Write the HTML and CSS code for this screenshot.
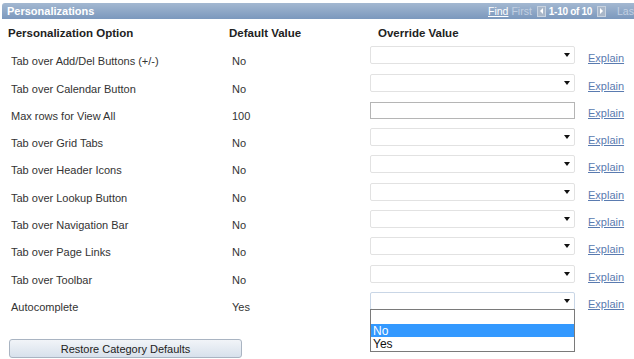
FILE: index.html
```html
<!DOCTYPE html>
<html lang="en">
<head>
    <meta charset="UTF-8">
    <title>Personalizations</title>
    <link rel="stylesheet" href="styles.css">
</head>
<body>

<div class="grid-bar">
    <span class="bar-title">Personalizations</span>
    <span class="bar-nav">
        <a class="find">Find</a>
        <span class="dim first">First</span>
        <span class="nav-icon"><svg width="7" height="8" viewBox="0 0 7 8"><path d="M5 1 L2 4 L5 7 Z" fill="#fff"/></svg></span>
        <b class="count">1-10 of 10</b>
        <span class="nav-icon next"><svg width="7" height="8" viewBox="0 0 7 8"><path d="M2 1 L5 4 L2 7 Z" fill="#fff"/></svg></span>
        <span class="dim last">Last</span>
    </span>
</div>

<div class="options">
    <div class="head">Personalization Option</div>
    <div class="head">Default Value</div>
    <div class="head head-override">Override Value</div>
    <div class="head"></div>

    <div class="opt">Tab over Add/Del Buttons (+/-)</div>
    <div class="def">No</div>
    <div class="val"><div class="dropdown"><span class="arrow"></span></div></div>
    <div class="explain"><a>Explain</a></div>

    <div class="opt">Tab over Calendar Button</div>
    <div class="def">No</div>
    <div class="val"><div class="dropdown"><span class="arrow"></span></div></div>
    <div class="explain"><a>Explain</a></div>

    <div class="opt">Max rows for View All</div>
    <div class="def">100</div>
    <div class="val"><div class="textbox"></div></div>
    <div class="explain"><a>Explain</a></div>

    <div class="opt">Tab over Grid Tabs</div>
    <div class="def">No</div>
    <div class="val"><div class="dropdown"><span class="arrow"></span></div></div>
    <div class="explain"><a>Explain</a></div>

    <div class="opt">Tab over Header Icons</div>
    <div class="def">No</div>
    <div class="val"><div class="dropdown"><span class="arrow"></span></div></div>
    <div class="explain"><a>Explain</a></div>

    <div class="opt">Tab over Lookup Button</div>
    <div class="def">No</div>
    <div class="val"><div class="dropdown"><span class="arrow"></span></div></div>
    <div class="explain"><a>Explain</a></div>

    <div class="opt">Tab over Navigation Bar</div>
    <div class="def">No</div>
    <div class="val"><div class="dropdown"><span class="arrow"></span></div></div>
    <div class="explain"><a>Explain</a></div>

    <div class="opt">Tab over Page Links</div>
    <div class="def">No</div>
    <div class="val"><div class="dropdown"><span class="arrow"></span></div></div>
    <div class="explain"><a>Explain</a></div>

    <div class="opt">Tab over Toolbar</div>
    <div class="def">No</div>
    <div class="val"><div class="dropdown"><span class="arrow"></span></div></div>
    <div class="explain"><a>Explain</a></div>

    <div class="opt">Autocomplete</div>
    <div class="def">Yes</div>
    <div class="val">
        <div class="dropdown open"><span class="arrow"></span></div>
        <ul class="list">
            <li>&nbsp;</li>
            <li class="picked">No</li>
            <li>Yes</li>
        </ul>
    </div>
    <div class="explain"><a>Explain</a></div>
</div>

<button class="restore">Restore Category Defaults</button>

</body>
</html>
```

FILE: styles.css
```css
body { margin: 0; font-family: "Liberation Sans", Arial, sans-serif; font-size: 11px; color: #333; background: #fff; }

.grid-bar {
    display: flex;
    align-items: center;
    height: 16px;
    margin: 3px 0 0 2px;
    padding-left: 5px;
    background: linear-gradient(#a3b8d1, #7b98bd);
    border-top-left-radius: 3px;
    color: #fff;
    font-size: 11px;
    white-space: nowrap;
    overflow: hidden;
}
.bar-title { font-weight: bold; flex: none; width: 481px; }
.bar-nav { display: flex; align-items: center; flex: none; font-size: 10.5px; }
.find { color: #fff; text-decoration: underline; }
.dim { color: #c2d0e2; }
.first { margin: 0 5px 0 3px; }
.count { color: #fff; margin: 0 5px 0 3px; font-size: 10px; letter-spacing: -0.3px; }
.last { margin-left: 11px; }
.nav-icon {
    display: inline-flex; align-items: center; justify-content: center;
    width: 7px; height: 9px; background: #a9b7c9; border: 1px solid #c8d3e0;
}

.options {
    display: grid;
    grid-template-columns: 221px 138px 218px 46px;
    grid-auto-rows: 27.3px;
    padding-left: 11px;
}
.head {
    height: 27px;
    padding-top: 8px;
    margin-left: -3px;
    font-size: 11.5px;
    font-weight: bold;
    color: #222;
    box-sizing: border-box;
}
.head-override { margin-left: 8px; }
.opt, .def { padding-top: 8px; line-height: 14px; }
.explain { padding-top: 5px; line-height: 14px; }
.explain a { color: #5a7bb0; text-decoration: underline; }

.val { position: relative; }
.dropdown, .textbox {
    width: 205px;
    height: 18px;
    box-sizing: border-box;
    background: #fff;
}
.dropdown {
    position: relative;
    border: 1px solid #e2e2e2;
    border-radius: 2px;
}
.dropdown.open { border-color: #c9d6e6; }
.arrow {
    position: absolute;
    right: 4px; top: 6px;
    border-left: 3px solid transparent;
    border-right: 3px solid transparent;
    border-top: 4px solid #111;
}
.textbox { height: 17px; margin-top: 1px; border: 1px solid #b5b5b5; }

.list {
    position: absolute;
    left: 0; top: 17px;
    width: 205px;
    margin: 0; padding: 0;
    list-style: none;
    background: #fff;
    border: 1px solid #7a7a7a;
    box-sizing: border-box;
    color: #111;
    font-size: 12px;
    z-index: 2;
}
.list li { height: 13.7px; line-height: 14px; padding-left: 2px; }
.list li.picked { background: #3399ff; color: #fff; }

.restore {
    display: block;
    width: 233px;
    height: 19px;
    margin: 20px 0 0 9px;
    padding: 0;
    font-family: "Liberation Sans", Arial, sans-serif;
    font-size: 11px;
    color: #222;
    background: linear-gradient(#f1f4f8, #d8e1ec);
    border: 1px solid #a9b4c2;
    border-radius: 3px;
}
```
